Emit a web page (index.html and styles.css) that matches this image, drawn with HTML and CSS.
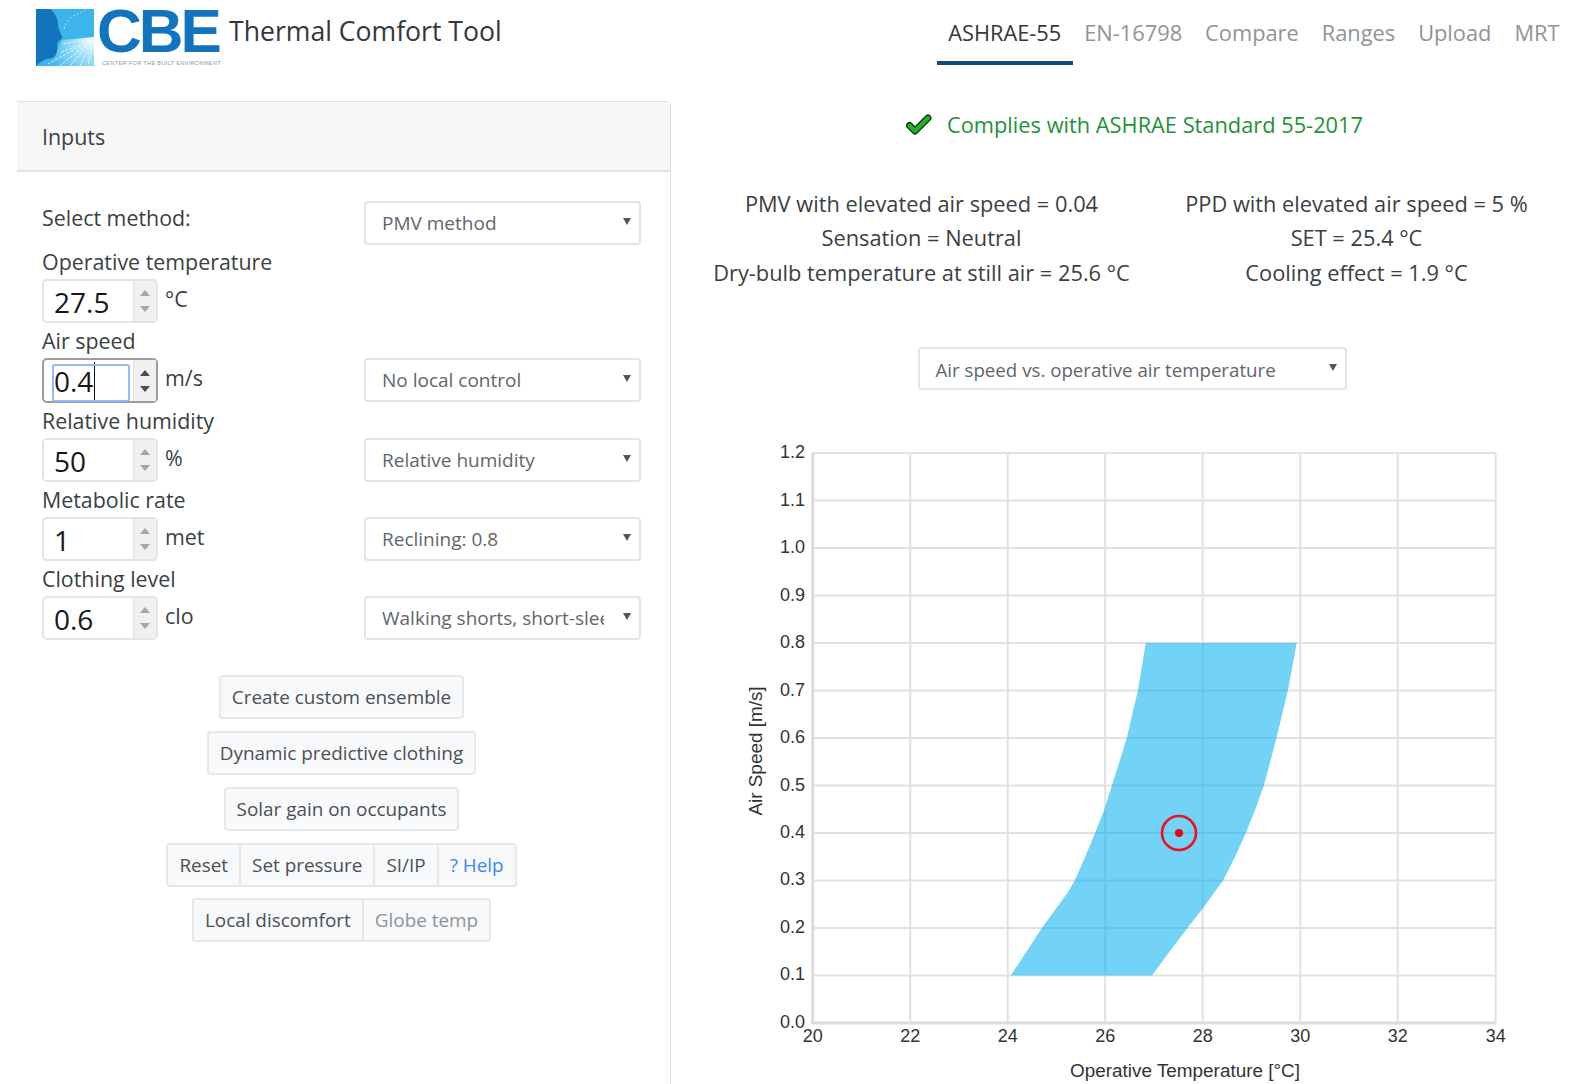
FILE: index.html
```html
<!DOCTYPE html>
<html lang="en">
<head>
<meta charset="utf-8">
<title>CBE Thermal Comfort Tool</title>
<link rel="stylesheet" href="styles.css">
</head>
<body>
<header class="topbar">
  <div class="brand">
    <svg class="logo-mark" width="58" height="57" viewBox="0 0 58 57">
      <defs>
        <radialGradient id="glow" gradientUnits="userSpaceOnUse" cx="57" cy="30" r="48">
          <stop offset="0" stop-color="#ffffff"/>
          <stop offset=".35" stop-color="#a9e2f8"/>
          <stop offset="1" stop-color="#3cb6ea"/>
        </radialGradient>
      </defs>
      <rect width="58" height="57" fill="#3cb6ea"/>
      <path d="M58 28L26 31L21 42L19 47L0 57H58Z" fill="url(#glow)"/>
      <path d="M14.7 0H0V57C4 53 7 51 10.7 50C15 49 18 49 19 47C21 44 21 42 21.3 40C21.3 36 21 34 22.3 32C24 31 26.5 30 26.3 27.7C25 24 23 22 22.3 18.7C22 14 22 12 20.7 8.7C19 5 17 2 14.7 0Z" fill="#1174bd"/>
      <path d="M57 30L26 35M57 30L24 44M57 30L12 55M57 30L24 57M57 30L34 57M57 30L44 57M57 30L52 57" stroke="#e8f8fe" stroke-width="1" stroke-dasharray="3 1.5" fill="none"/>
      <path d="M28 20C30 12 36 6 49 2" stroke="#a9e0f7" stroke-width="1" stroke-dasharray="2 2" fill="none"/>
    </svg>
    <div class="logo-text">
      <div class="logo-cbe">CBE</div>
      <div class="logo-sub">CENTER FOR THE BUILT ENVIRONMENT</div>
    </div>
    <div class="brand-title">Thermal Comfort Tool</div>
  </div>
  <nav class="tabs">
    <a class="tab active">ASHRAE-55</a>
    <a class="tab">EN-16798</a>
    <a class="tab">Compare</a>
    <a class="tab">Ranges</a>
    <a class="tab">Upload</a>
    <a class="tab">MRT</a>
  </nav>
</header>

<main class="content">
  <section class="panel">
    <div class="panel-head">Inputs</div>
    <div class="panel-body">
      <div class="method-row">
        <label class="method-label">Select method:</label>
        <div class="fake-select">PMV method</div>
      </div>

      <div class="group">
        <div class="group-label">Operative temperature</div>
        <div class="group-row">
          <div class="num"><span class="num-val">27.5</span><span class="spin"><i class="up"></i><i class="down"></i></span></div>
          <span class="unit">°C</span>
        </div>
      </div>

      <div class="group">
        <div class="group-label">Air speed</div>
        <div class="group-row">
          <div class="num focus"><span class="num-val"><span class="caret">0.4</span></span><span class="spin"><i class="up"></i><i class="down"></i></span></div>
          <span class="unit">m/s</span>
          <div class="fake-select">No local control</div>
        </div>
      </div>

      <div class="group">
        <div class="group-label">Relative humidity</div>
        <div class="group-row">
          <div class="num"><span class="num-val">50</span><span class="spin"><i class="up"></i><i class="down"></i></span></div>
          <span class="unit">%</span>
          <div class="fake-select">Relative humidity</div>
        </div>
      </div>

      <div class="group">
        <div class="group-label">Metabolic rate</div>
        <div class="group-row">
          <div class="num"><span class="num-val">1</span><span class="spin"><i class="up"></i><i class="down"></i></span></div>
          <span class="unit">met</span>
          <div class="fake-select">Reclining: 0.8</div>
        </div>
      </div>

      <div class="group">
        <div class="group-label">Clothing level</div>
        <div class="group-row">
          <div class="num"><span class="num-val">0.6</span><span class="spin"><i class="up"></i><i class="down"></i></span></div>
          <span class="unit">clo</span>
          <div class="fake-select clipped"><span>Walking shorts, short-sleeve shirt: 0.57</span></div>
        </div>
      </div>

      <div class="actions">
        <div class="btn-group"><button class="btn">Create custom ensemble</button></div>
        <div class="btn-group"><button class="btn">Dynamic predictive clothing</button></div>
        <div class="btn-group"><button class="btn">Solar gain on occupants</button></div>
        <div class="btn-group">
          <button class="btn">Reset</button><button class="btn">Set pressure</button><button class="btn">SI/IP</button><button class="btn help">? Help</button>
        </div>
        <div class="btn-group">
          <button class="btn">Local discomfort</button><button class="btn muted">Globe temp</button>
        </div>
      </div>
    </div>
  </section>

  <section class="results">
    <div class="status">
      <svg class="check" width="26" height="22" viewBox="0 0 26 22">
        <path d="M3.5 12.5L9 18L22 5" fill="none" stroke="#1d3a1d" stroke-width="7" stroke-linejoin="round" stroke-linecap="round"/>
        <path d="M3.5 12.5L9 18L22 5" fill="none" stroke="#21b521" stroke-width="4" stroke-linejoin="round" stroke-linecap="round"/>
      </svg>
      <span>Complies with ASHRAE Standard 55-2017</span>
    </div>

    <div class="values">
      <div>PMV with elevated air speed = 0.04</div>
      <div>PPD with elevated air speed = 5 %</div>
      <div>Sensation = Neutral</div>
      <div>SET = 25.4 °C</div>
      <div>Dry-bulb temperature at still air = 25.6 °C</div>
      <div>Cooling effect = 1.9 °C</div>
    </div>

    <div class="chart-pick">
      <div class="fake-select wide">Air speed vs. operative air temperature</div>
    </div>

    <svg class="chart" width="814" height="654" viewBox="730 430 814 654">
      <g class="grid">
        <path d="M910.2 453V1022.5M1007.7 453V1022.5M1105.2 453V1022.5M1202.7 453V1022.5M1300.2 453V1022.5M1397.7 453V1022.5M1495.7 453V1022.5"/>
        <path d="M812.7 453H1495.7M812.7 500.5H1495.7M812.7 548H1495.7M812.7 595.5H1495.7M812.7 643H1495.7M812.7 690.5H1495.7M812.7 738H1495.7M812.7 785.5H1495.7M812.7 833H1495.7M812.7 880.5H1495.7M812.7 928H1495.7M812.7 975.5H1495.7"/>
        <path class="axis" d="M812.7 453V1023H1495.7"/>
      </g>
      <path class="zone" d="M1010.8 975.5L1041.9 928L1060 903L1068 892L1075 880L1085.5 856L1095 833L1104.5 809L1112 785L1120 760L1127 737L1132.5 713L1138 690L1142 666L1145.7 643H1296.7L1292.5 666L1288 690L1282.5 713L1276.7 737L1270.5 761L1264 785L1255.5 809L1245.8 833L1235 857L1223.4 880L1204 906.7L1187.7 927.7L1170 951L1152 975.5Z"/>
      <circle class="pt-ring" cx="1179" cy="833" r="17"/>
      <circle class="pt-dot" cx="1179" cy="833" r="4"/>
      <g class="ticks-y">
        <text x="805" y="458">1.2</text>
        <text x="805" y="506">1.1</text>
        <text x="805" y="553">1.0</text>
        <text x="805" y="601">0.9</text>
        <text x="805" y="648">0.8</text>
        <text x="805" y="696">0.7</text>
        <text x="805" y="743">0.6</text>
        <text x="805" y="791">0.5</text>
        <text x="805" y="838">0.4</text>
        <text x="805" y="885">0.3</text>
        <text x="805" y="933">0.2</text>
        <text x="805" y="980">0.1</text>
        <text x="805" y="1028">0.0</text>
      </g>
      <g class="ticks-x">
        <text x="812.7" y="1042">20</text>
        <text x="910.2" y="1042">22</text>
        <text x="1007.7" y="1042">24</text>
        <text x="1105.2" y="1042">26</text>
        <text x="1202.7" y="1042">28</text>
        <text x="1300.2" y="1042">30</text>
        <text x="1397.7" y="1042">32</text>
        <text x="1495.7" y="1042">34</text>
      </g>
      <text class="axis-title" x="1185" y="1077">Operative Temperature [°C]</text>
      <text class="axis-title" transform="translate(762 751) rotate(-90)">Air Speed [m/s]</text>
    </svg>
  </section>
</main>
</body>
</html>
```

FILE: styles.css
```css
*{box-sizing:border-box;margin:0;padding:0}
body{width:1585px;height:1084px;overflow:hidden;background:#fff;color:#3a3f44;font-family:"Open Sans","Noto Sans",sans-serif;font-size:21.4px}

/* header */
.topbar{display:flex;justify-content:space-between;height:101px;padding:9px 14px 0 36px}
.brand{display:flex;align-items:flex-start}
.logo-mark{display:block;margin-right:3px}
.logo-text{width:129px;color:#1174bd}
.logo-cbe{font:bold 62px/44px "Liberation Sans",sans-serif;letter-spacing:-3px}
.logo-sub{margin:7px 0 0 5px;font:5.6px/7px "Liberation Sans",sans-serif;color:#8b979f;white-space:nowrap;letter-spacing:.32px}
.brand-title{margin:3px 0 0 3px;font-size:26.6px;line-height:38px;color:#33383d}
.tabs{display:flex;margin-top:-9px;height:65px}
.tab{padding:0 11.5px;line-height:66px;font-size:21.8px;color:#8d949b;border-bottom:4px solid transparent}
.tab.active{color:#33383d;border-bottom-color:#164a78}

/* layout */
.content{display:flex;align-items:flex-start}
.panel{width:654px;height:983px;margin-left:17px;border-right:1px solid #dfe1e3;border-top:1px solid #dfe1e3;border-top-right-radius:4px}
.panel-head{height:70px;padding-left:25px;line-height:70px;background:#f7f7f7;border-bottom:2px solid #dfe1e3}
.panel-body{padding:29px 29px 0 25px}

/* inputs */
.method-row{display:flex;justify-content:space-between;height:45px}
.method-label{line-height:34px}
.group{height:79.25px}
.group-label{height:33px;line-height:32px}
.group-row{display:flex;align-items:flex-start}
.num{display:flex;width:116px;height:44px;border:2px solid #e2e4e6;border-radius:5px;color:#15181b}
.num-val{flex:1;padding-left:10px;font-size:28px;line-height:42px}
.spin{display:flex;flex-direction:column;justify-content:space-around;align-items:center;width:23px;padding:4px 0;background:#f0f0f0;border-left:1px solid #e2e2e2}
.spin i{display:block;width:0;height:0;border-left:5.5px solid transparent;border-right:5.5px solid transparent}
.spin .up{border-bottom:6px solid #a6a6a6}
.spin .down{border-top:6px solid #a6a6a6}
.num.focus{border-color:#9b9b9b;height:45px}
.num.focus .num-val{position:relative;padding-left:10px}
.num.focus .num-val::before{content:"";position:absolute;left:8px;top:4px;width:74px;height:34px;border:2px solid #8fbcf9;border-radius:3px}
.num.focus .spin .up{border-bottom-color:#4d4d4d}
.num.focus .spin .down{border-top-color:#4d4d4d}
.caret{border-right:1px solid #111;padding-right:1px}
.unit{width:206px;padding-left:7px;line-height:40px}
.fake-select{position:relative;width:277px;height:44px;padding-left:16px;border:2px solid #e2e4e8;border-radius:4px;color:#60666c;font-size:19px;line-height:41px;white-space:nowrap;overflow:hidden}
.fake-select::after{content:"";position:absolute;right:8px;top:15px;border-left:4px solid transparent;border-right:4px solid transparent;border-top:7px solid #555}
.fake-select.clipped span{display:block;width:222px;overflow:hidden}
.fake-select.wide{width:429px;height:43px;font-size:18.7px}

/* buttons */
.actions{display:flex;flex-direction:column;align-items:center;margin-top:33px}
.btn-group{display:flex;height:44px;margin-bottom:11.75px}
.btn{height:44px;padding:0 11px;border:2px solid #e6e8eb;border-left-width:0;background:#f8f9fa;color:#4a5056;font:18.9px "Open Sans","Noto Sans",sans-serif}
.btn:first-child{border-left-width:2px;border-radius:4px 0 0 4px}
.btn:last-child{border-radius:0 4px 4px 0}
.btn:only-child{border-radius:4px}
.btn.help{color:#3d85f5}
.btn.muted{color:#8d949b}

/* results */
.results{flex:1}
.status{display:flex;align-items:center;justify-content:center;height:46px;padding-left:13px;color:#1f9136;font-size:21.8px}
.check{margin-right:15px}
.values{display:grid;grid-template-columns:435px 435px;grid-auto-rows:34.4px;margin:40px 0 0 33px;line-height:34px;text-align:center;font-size:21.8px}
.chart-pick{display:flex;justify-content:center;margin-top:56.5px;padding-left:8px}
.chart{display:block;margin:40.3px 0 0 59px}

/* chart */
.grid path{fill:none;stroke:#e1e1e1;stroke-width:2}
.grid .axis{stroke:#dcdcdc;stroke-width:3}
.zone{fill:#00aeef;fill-opacity:.55}
.pt-ring{fill:none;stroke:#ee1122;stroke-width:2.6}
.pt-dot{fill:#ee0011}
.chart text{font-family:"Liberation Sans",sans-serif;font-size:18px;fill:#333}
.ticks-y text{text-anchor:end}
.ticks-x text{text-anchor:middle}
.chart .axis-title{text-anchor:middle;font-size:18.9px}
```
